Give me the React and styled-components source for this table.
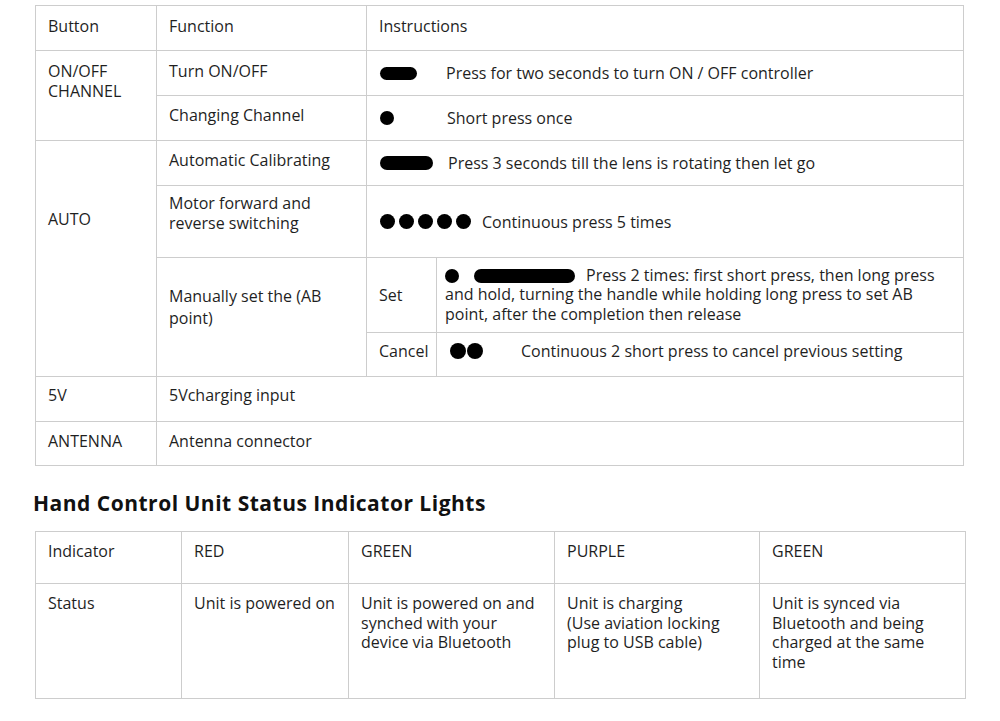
import React from "react";
import styled, { createGlobalStyle } from "styled-components";

const GlobalStyle = createGlobalStyle`
  body {
    margin: 0;
    background: #ffffff;
    color: #1f1f1f;
    font-family: "Open Sans", "DejaVu Sans", sans-serif;
  }
`;

const Page = styled.div`
  padding: 5px 0 0 35px;
`;

const Table = styled.table`
  width: ${(p) => p.$width}px;
  border-collapse: collapse;
  table-layout: fixed;
  font-size: 16px;
  line-height: ${(p) => p.$lh || 20}px;
`;

const Row = styled.tr`
  height: ${(p) => p.$h}px;
`;

const Cell = styled.td`
  border: 1px solid #cdcdcd;
  padding: ${(p) => p.$pt ?? 10}px 12px 0 ${(p) => p.$pl ?? 12}px;
  vertical-align: ${(p) => (p.$mid ? "middle" : "top")};
  ${(p) => p.$mid && "padding-top: 0;"}
  ${(p) => p.$lh && `line-height: ${p.$lh}px;`}
  box-sizing: border-box;
`;

const Instr = styled.div`
  display: flex;
  align-items: center;
`;

const Marks = styled.span`
  display: inline-flex;
  align-items: center;
  gap: ${(p) => p.$gap || 0}px;
  margin-right: ${(p) => p.$after}px;
  flex-shrink: 0;
`;

const Dot = styled.span`
  display: inline-block;
  width: ${(p) => p.$size || 14}px;
  height: ${(p) => p.$size || 14}px;
  border-radius: 50%;
  background: #000;
`;

const Pill = styled.span`
  display: inline-block;
  width: ${(p) => p.$w}px;
  height: ${(p) => p.$h || 14}px;
  border-radius: 8px;
  background: #000;
  vertical-align: -2px;
  margin-right: ${(p) => p.$after || 0}px;
`;

const InlineDot = styled(Dot)`
  vertical-align: -2px;
  margin-right: ${(p) => p.$after || 0}px;
`;

const Heading = styled.h2`
  margin: 23px 0 14px -2px;
  font-size: 21px;
  line-height: 28px;
  font-weight: 700;
  letter-spacing: 0.5px;
  color: #111;
`;

const indicators = [
  { name: "Indicator", status: "Status" },
  { name: "RED", status: "Unit is powered on" },
  { name: "GREEN", status: "Unit is powered on and synched with your device via Bluetooth" },
  {
    name: "PURPLE",
    status: (
      <>
        Unit is charging
        <br />
        (Use aviation locking plug to USB cable)
      </>
    ),
  },
  { name: "GREEN", status: "Unit is synced via Bluetooth and being charged at the same time" },
];

const App = () => {
  return (
    <Page>
      <GlobalStyle />
      <Table $width={928}>
        <colgroup>
          <col style={{ width: 121 }} />
          <col style={{ width: 210 }} />
          <col style={{ width: 70 }} />
          <col style={{ width: 527 }} />
        </colgroup>
        <tbody>
          <Row $h={45}>
            <Cell>Button</Cell>
            <Cell>Function</Cell>
            <Cell colSpan={2}>Instructions</Cell>
          </Row>
          <Row $h={45}>
            <Cell rowSpan={2}>
              ON/OFF
              <br />
              CHANNEL
            </Cell>
            <Cell>Turn ON/OFF</Cell>
            <Cell colSpan={2} $mid $pl={13}>
              <Instr>
                <Marks $after={29}>
                  <Pill $w={37} $h={13} />
                </Marks>
                Press for two seconds to turn ON / OFF controller
              </Instr>
            </Cell>
          </Row>
          <Row $h={45}>
            <Cell $pt={9}>Changing Channel</Cell>
            <Cell colSpan={2} $mid $pl={13}>
              <Instr>
                <Marks $after={53}>
                  <Dot />
                </Marks>
                Short press once
              </Instr>
            </Cell>
          </Row>
          <Row $h={45}>
            <Cell rowSpan={4} $pt={68}>
              AUTO
            </Cell>
            <Cell $pt={9}>Automatic Calibrating</Cell>
            <Cell colSpan={2} $mid $pl={13}>
              <Instr>
                <Marks $after={15}>
                  <Pill $w={53} />
                </Marks>
                Press 3 seconds till the lens is rotating then let go
              </Instr>
            </Cell>
          </Row>
          <Row $h={72}>
            <Cell $pt={7}>Motor forward and reverse switching</Cell>
            <Cell colSpan={2} $mid $pl={13}>
              <Instr>
                <Marks $gap={4} $after={11}>
                  <Dot $size={15} />
                  <Dot $size={15} />
                  <Dot $size={15} />
                  <Dot $size={15} />
                  <Dot $size={15} />
                </Marks>
                Continuous press 5 times
              </Instr>
            </Cell>
          </Row>
          <Row $h={75}>
            <Cell rowSpan={2} $pt={27} $lh={22}>
              Manually set the (AB point)
            </Cell>
            <Cell $mid>Set</Cell>
            <Cell $mid $pl={8} $lh={19.5}>
              <InlineDot $after={15} />
              <Pill $w={101} $after={11} />
              Press 2 times: first short press, then long press and hold, turning the handle
              while holding long press to set AB point, after the completion then release
            </Cell>
          </Row>
          <Row $h={44}>
            <Cell $pt={8}>Cancel</Cell>
            <Cell $pt={8} $pl={13}>
              <Instr>
                <Marks $gap={1} $after={38}>
                  <Dot $size={16} />
                  <Dot $size={16} />
                </Marks>
                Continuous 2 short press to cancel previous setting
              </Instr>
            </Cell>
          </Row>
          <Row $h={45}>
            <Cell $pt={8}>5V</Cell>
            <Cell colSpan={3} $pt={8}>
              5Vcharging input
            </Cell>
          </Row>
          <Row $h={44}>
            <Cell $pt={9}>ANTENNA</Cell>
            <Cell colSpan={3} $pt={9}>
              Antenna connector
            </Cell>
          </Row>
        </tbody>
      </Table>

      <Heading>Hand Control Unit Status Indicator Lights</Heading>

      <Table $width={930} $lh={19.5}>
        <colgroup>
          <col style={{ width: 146 }} />
          <col style={{ width: 167 }} />
          <col style={{ width: 206 }} />
          <col style={{ width: 205 }} />
          <col style={{ width: 206 }} />
        </colgroup>
        <tbody>
          <Row $h={52}>
            {indicators.map((item, i) => (
              <Cell key={i}>{item.name}</Cell>
            ))}
          </Row>
          <Row $h={115}>
            {indicators.map((item, i) => (
              <Cell key={i}>{item.status}</Cell>
            ))}
          </Row>
        </tbody>
      </Table>
    </Page>
  );
};

export default App;
